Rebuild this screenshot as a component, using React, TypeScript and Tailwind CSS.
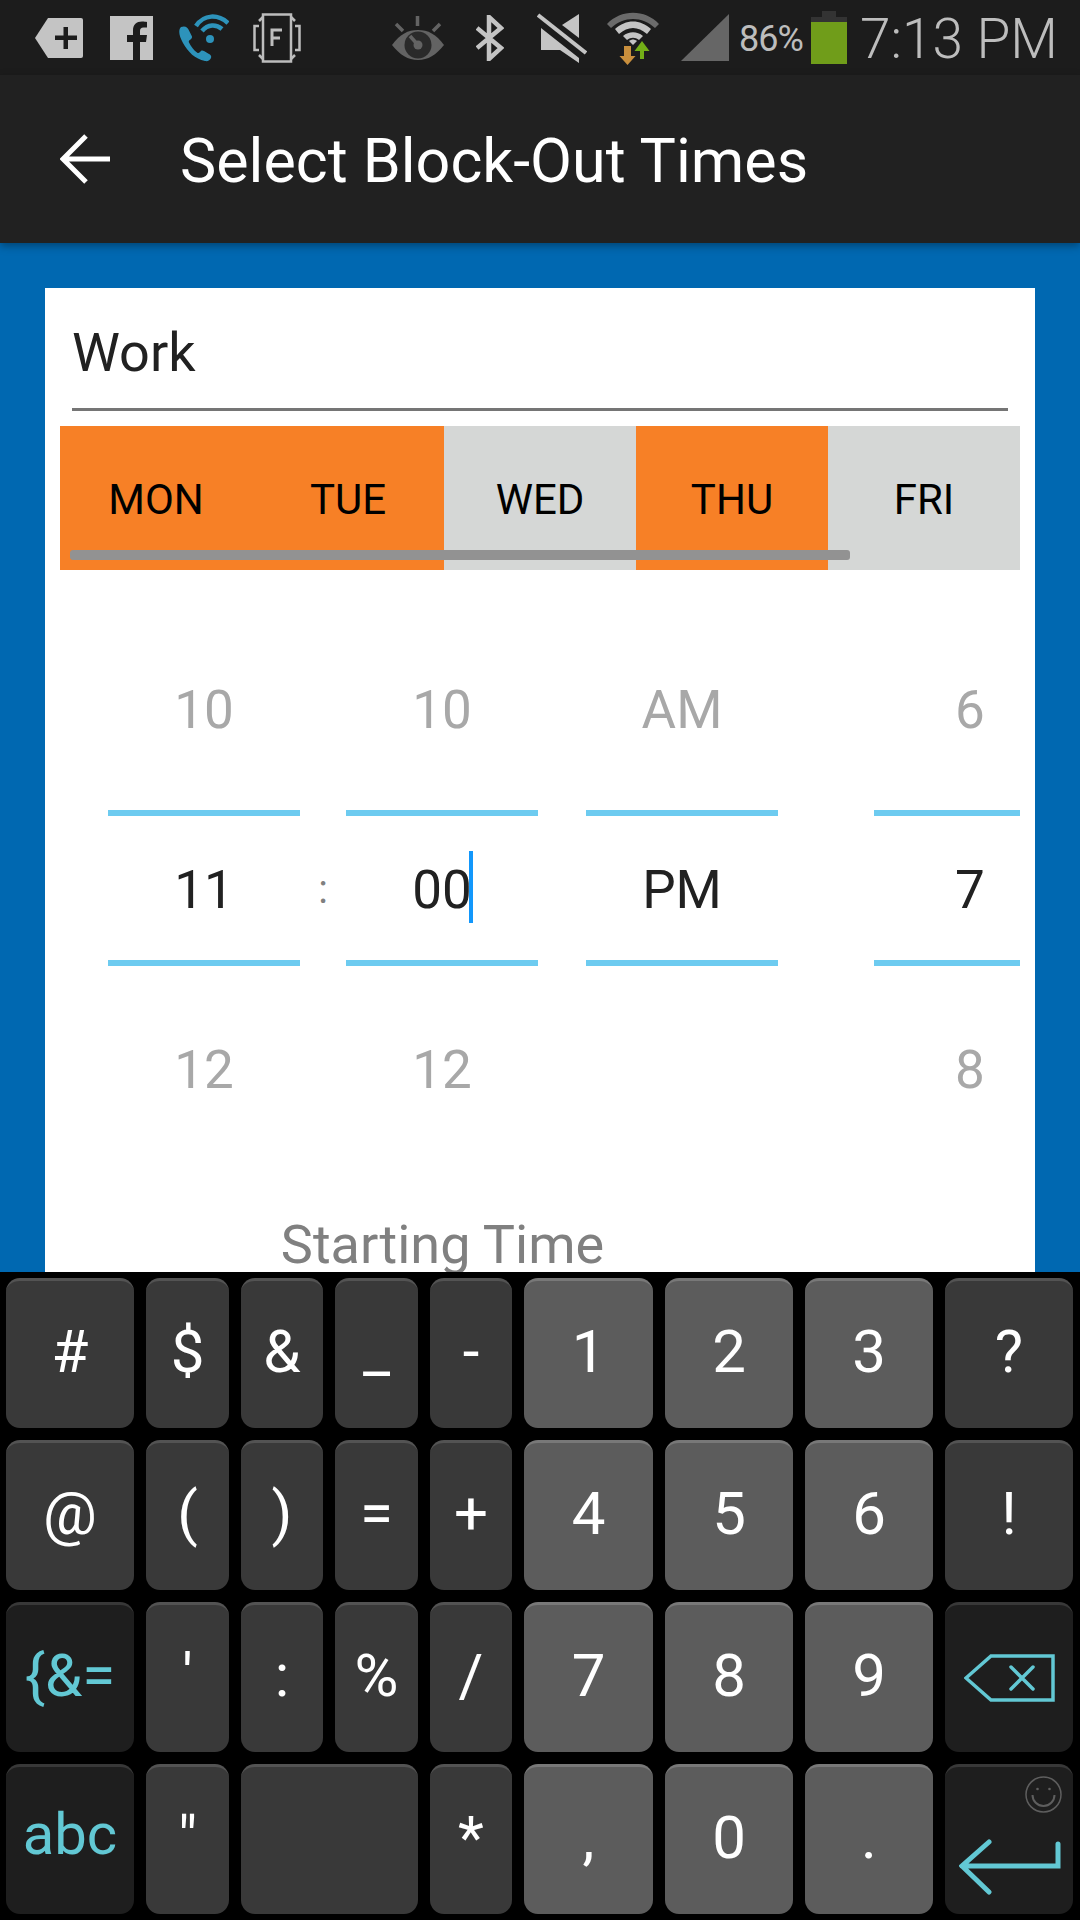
const roboto = "font-['Roboto',sans-serif]";

type KeyDef = { label?: string; w: number; kind: 'sym' | 'num' | 'fn'; icon?: 'back' | 'enter'; extra?: string };

const rows: KeyDef[][] = [
  [
    { label: '#', w: 128, kind: 'sym' }, { label: '$', w: 83, kind: 'sym' }, { label: '&', w: 82, kind: 'sym' },
    { label: '_', w: 83, kind: 'sym' }, { label: '-', w: 82, kind: 'sym' }, { label: '1', w: 129, kind: 'num' },
    { label: '2', w: 128, kind: 'num' }, { label: '3', w: 128, kind: 'num' }, { label: '?', w: 128, kind: 'sym' },
  ],
  [
    { label: '@', w: 128, kind: 'sym' }, { label: '(', w: 83, kind: 'sym' }, { label: ')', w: 82, kind: 'sym' },
    { label: '=', w: 83, kind: 'sym' }, { label: '+', w: 82, kind: 'sym' }, { label: '4', w: 129, kind: 'num' },
    { label: '5', w: 128, kind: 'num' }, { label: '6', w: 128, kind: 'num' }, { label: '!', w: 128, kind: 'sym' },
  ],
  [
    { label: '{&=', w: 128, kind: 'fn' }, { label: "'", w: 83, kind: 'sym' }, { label: ':', w: 82, kind: 'sym' },
    { label: '%', w: 83, kind: 'sym' }, { label: '/', w: 82, kind: 'sym' }, { label: '7', w: 129, kind: 'num' },
    { label: '8', w: 128, kind: 'num' }, { label: '9', w: 128, kind: 'num' }, { w: 128, kind: 'fn', icon: 'back' },
  ],
  [
    { label: 'abc', w: 128, kind: 'fn', extra: 'pb-[14px] text-[58px]' }, { label: '"', w: 83, kind: 'sym' }, { w: 177, kind: 'sym' },
    { label: '*', w: 82, kind: 'sym' }, { label: ',', w: 129, kind: 'num' },
    { label: '0', w: 128, kind: 'num' }, { label: '.', w: 128, kind: 'num' }, { w: 128, kind: 'fn', icon: 'enter' },
  ],
];

const days = [
  { name: 'MON', on: true },
  { name: 'TUE', on: true },
  { name: 'WED', on: false },
  { name: 'THU', on: true },
  { name: 'FRI', on: false },
];

function StatusIcons() {
  return (
    <>
      <svg className="ml-[35px] shrink-0" width="48" height="40" viewBox="0 0 48 40">
        <path d="M13 0h33a2 2 0 0 1 2 2v36a2 2 0 0 1-2 2H13L0 20z" fill="#c4c4c4" />
        <path d="M20 17.500h8.500V9h4.500v8.500h9V22h-9v9h-4.500v-9H20z" fill="#1c1c1c" />
      </svg>
      <svg className="ml-[27px] shrink-0" width="43" height="44" viewBox="0 0 43 44">
        <rect width="43" height="44" fill="#c4c4c4" />
        <path d="M30 44V26h6l1-7h-7v-4c0-2 1-3.500 3.500-3.500H37V6c-1-.2-3-.4-5-.4-5.500 0-9 3-9 8.800v4.600h-6v7h6v18z" fill="#1c1c1c" />
      </svg>
      <svg className="ml-[26px] shrink-0" width="50" height="48" viewBox="0 0 50 48">
        <path d="M2 13c-3 3-2 9 2 16 5 9 12 16 22 18 3 .6 5-1 6-3 .6-2-.2-3-2-4l-5-3c-2-1-3-.5-4 1-1 1-2 1.500-3 .5-3-2-6-6-8-10-.6-1.500 0-2 1.500-3 1.500-1 2-2.500 1-4l-3-6c-1-2-3-4-7.500-2.500z" fill="#2d93bb" />
        <path d="M17 12C25 0 39 0 49 9" fill="none" stroke="#2d93bb" strokeWidth="4.500" />
        <path d="M23 17c6-7 14-7 20-2" fill="none" stroke="#2d93bb" strokeWidth="4.500" />
        <circle cx="31" cy="25" r="4" fill="#2d93bb" />
      </svg>
      <svg className="ml-[23px] shrink-0" width="50" height="50" viewBox="0 0 50 50" fill="none" stroke="#bdbdbd" strokeWidth="2.500">
        <rect x="11" y="1.500" width="28" height="47" />
        <path d="M7 13H2.500v24H7M43 13h4.500v24H43M7 8l4-4M43 8l-4-4M7 42l4 4M43 42l-4 4" />
        <path d="M20 33V17h10M20 25h8" strokeWidth="3" />
      </svg>
      <svg className="ml-[90px] shrink-0" width="52" height="44" viewBox="0 0 52 44">
        <path d="M0 29C8 18 16 14 26 14s18 4 26 15c-8 10-16 15-26 15S8 39 0 29z" fill="#636363" />
        <circle cx="26" cy="29" r="13.500" fill="#2a2a2a" />
        <circle cx="26" cy="29" r="4.500" fill="#636363" />
        <path d="M25.500 0v10M4 8l7 7M48 8l-7 7M18 20l8 9" stroke="#636363" strokeWidth="3.500" />
      </svg>
      <svg className="ml-[32px] shrink-0" width="28" height="46" viewBox="0 0 28 46" fill="none" stroke="#c4c4c4" strokeWidth="4.500">
        <path d="M1 13l24 20-12 11V2l12 11L1 33" />
      </svg>
      <svg className="ml-[33px] shrink-0" width="50" height="50" viewBox="0 0 50 50">
        <path d="M42 1L25 12l17 13z" fill="#c4c4c4" />
        <path d="M4 15l38 30v5L23 37H4z" fill="#c4c4c4" />
        <path d="M1 2l48 38" stroke="#c4c4c4" strokeWidth="4" />
      </svg>
      <svg className="ml-[20px] shrink-0" width="52" height="54" viewBox="0 0 52 54">
        <path d="M0 13C14 -2 38 -2 52 13l-4 4C35 5 17 5 4 17z" fill="#6b6b6b" />
        <path d="M8 18C19 8 33 8 44 18l-4 5C31 15 21 15 12 23z" fill="#c4c4c4" />
        <path d="M16 25c6-5 14-5 20 0l-4 4c-4-3-8-3-12 0z" fill="#c4c4c4" />
        <path d="M22 30c3-2 5-2 8 0l-4 4z" fill="#c4c4c4" />
        <path d="M17 35h7v10h4.500L20.500 54l-8-9H17z" fill="#c98f3d" />
        <path d="M33 48V40h-5.500L35 30l7.500 10H37v8z" fill="#73ae17" />
      </svg>
      <svg className="ml-[22px] shrink-0" width="48" height="47" viewBox="0 0 48 47">
        <path d="M48 0v47H0z" fill="#666666" />
      </svg>
      <span className={`ml-[10px] mt-[2px] w-[64px] shrink-0 text-[36px] leading-none tracking-[-1px] text-[#bdbdbd] ${roboto}`}>86%</span>
      <div className="ml-[8px] flex h-[53px] w-[36px] shrink-0 flex-col items-center">
        <div className="h-[6px] w-[14px] bg-[#333333]" />
        <div className="h-[5px] w-full bg-[#333333]" />
        <div className="w-full flex-1 bg-[#709d1a]" />
      </div>
      <span className={`ml-[13px] mt-[3px] shrink-0 text-[55px] font-light leading-none text-[#bdbdbd] ${roboto}`}>7:13 PM</span>
    </>
  );
}

function BackspaceIcon() {
  return (
    <svg className="ml-[2px] mt-[4px]" width="92" height="48" viewBox="0 0 92 48" fill="none" stroke="#62c8d4" strokeWidth="3.500">
      <path d="M2 24L27 2h62v44H27z" />
      <path d="M47 13l22 22M69 13L47 35" strokeLinecap="round" />
    </svg>
  );
}

function EnterIcon() {
  return (
    <svg width="102" height="56" viewBox="0 0 102 56" fill="none" stroke="#62c8d4" strokeWidth="5" strokeLinecap="round">
      <path d="M30 3L3 27l27 26M3 27h96V5" />
    </svg>
  );
}

function Smile() {
  return (
    <svg className="absolute right-[11px] top-[9px]" width="37" height="37" viewBox="0 0 37 37" fill="none" stroke="#5e5e5e" strokeWidth="1.500">
      <circle cx="18.500" cy="18.500" r="17.500" />
      <path d="M7.500 19a11 11 0 0 0 22 0" strokeWidth="2" />
      <circle cx="12.500" cy="13" r="1.300" fill="#5e5e5e" stroke="none" />
      <circle cx="24.500" cy="13" r="1.300" fill="#5e5e5e" stroke="none" />
    </svg>
  );
}

function Key({ def }: { def: KeyDef }) {
  const tone =
    def.kind === 'num'
      ? 'bg-[#5c5c5c] border-[#787878] text-white'
      : def.kind === 'fn'
        ? 'bg-[#1e1e1e] border-[#383838] text-[#62c8d4]'
        : 'bg-[#393939] border-[#535353] text-white';
  return (
    <div
      className={`relative flex h-[150px] shrink-0 items-center justify-center rounded-[14px] border-t-[3px] leading-none ${tone} ${def.extra ?? 'pb-[6px] text-[60px]'}`}
      style={{ width: def.w }}
    >
      {def.icon === 'back' && <BackspaceIcon />}
      {def.icon === 'enter' && (
        <>
          <Smile />
          <div className="ml-[2px] mt-[58px]">
            <EnterIcon />
          </div>
        </>
      )}
      {def.label}
    </div>
  );
}

function Wheel({ top, mid, bottom, cursor, className }: { top: string; mid: string; bottom?: string; cursor?: boolean; className?: string }) {
  return (
    <div className={`flex w-[192px] shrink-0 flex-col items-center text-[53px] leading-[64px] ${className ?? ''}`}>
      <div className="h-[240px] pt-[108px] text-[#a8a8a8]">{top}</div>
      <div className="flex h-[156px] w-full items-center justify-center border-y-[6px] border-[#6dcbf0] pt-[4px] text-[#212121]">
        {mid}
        {cursor && <span className="mb-[6px] ml-[-3px] mr-[-1px] inline-block h-[72px] w-[4px] bg-[#1297fb]" />}
      </div>
      <div className="h-[140px] pt-[72px] text-[#a8a8a8]">{bottom}</div>
    </div>
  );
}

export default function App() {
  return (
    <div className={`flex h-[1920px] w-[1080px] flex-col overflow-hidden bg-[#0068b1] ${roboto}`}>
      <div className="flex h-[75px] shrink-0 items-center bg-[#1c1c1c]">
        <StatusIcons />
      </div>

      <div className="z-10 flex h-[168px] shrink-0 items-center bg-[#212121] shadow-[0_3px_8px_rgba(0,0,0,0.35)]">
        <svg className="ml-[60px] shrink-0" width="50" height="50" viewBox="0 0 50 50" fill="none" stroke="white" strokeWidth="5">
          <path d="M26 2L3 25l23 23M3 25h47" />
        </svg>
        <h1 className="ml-[70px] pt-[4px] text-[61px] leading-none text-white">Select Block-Out Times</h1>
      </div>

      <div className="flex min-h-0 flex-1 flex-col px-[45px] pt-[45px]">
        <div className="flex min-h-0 flex-1 flex-col overflow-hidden bg-white px-[15px]">
          <div className="mx-[12px] flex h-[123px] shrink-0 items-center border-b-[3px] border-[#757575] pt-[10px]">
            <span className="text-[54px] leading-none text-[#212121]">Work</span>
          </div>

          <div className="relative mt-[15px] flex h-[144px] w-[960px] shrink-0">
            {days.map((d) => (
              <div
                key={d.name}
                className={`flex w-[192px] items-center justify-center pt-[4px] text-[42px] leading-none text-black ${d.on ? 'bg-[#f78026]' : 'bg-[#d5d7d6]'}`}
              >
                {d.name}
              </div>
            ))}
            <div className="absolute left-[10px] top-[124px] h-[10px] w-[780px] rounded-[3px] bg-[#929292]" />
          </div>

          <div className="flex w-[960px] shrink-0 overflow-hidden">
            <Wheel className="ml-[48px]" top="10" mid="11" bottom="12" />
            <div className="flex w-[46px] shrink-0 justify-center pt-[300px] text-[40px] leading-none text-[#808080]">:</div>
            <Wheel top="10" mid="00" bottom="12" cursor />
            <Wheel className="ml-[48px]" top="AM" mid="PM" />
            <Wheel className="ml-[96px]" top="6" mid="7" bottom="8" />
          </div>

          <div className="mt-[109px] w-[765px] shrink-0 text-center text-[54px] leading-[60px] text-[#808080]">Starting Time</div>
        </div>
      </div>

      <div className="flex h-[648px] shrink-0 flex-col gap-[12px] bg-black pl-[6px] pt-[6px]">
        {rows.map((row, i) => (
          <div key={i} className="flex gap-[12px]">
            {row.map((k, j) => (
              <Key key={j} def={k} />
            ))}
          </div>
        ))}
      </div>
    </div>
  );
}
